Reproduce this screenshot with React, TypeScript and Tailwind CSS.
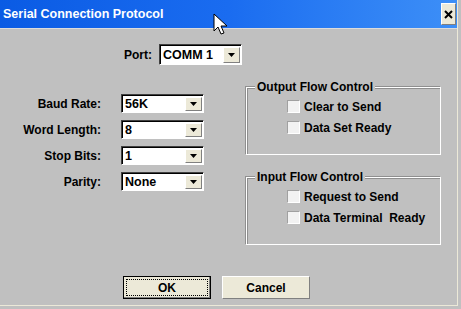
import React from "react";

const font = { fontFamily: '"Liberation Sans", Arial, sans-serif' };

function Combo({ value, width = "w-[83px]", height = "h-[19px]" }: { value: string; width?: string; height?: string }) {
  return (
    <div className={`${width} ${height} flex border border-t-[#404040] border-l-[#404040] border-r-white border-b-white bg-white`}>
      <div className="flex-1 flex border border-black border-r-0 border-b-0 min-w-0">
        <span className="flex-1 pl-[2px] text-[12.5px] font-bold leading-none self-center text-black">{value}</span>
        <div className="w-[17px] flex items-center justify-center bg-[#ece9d8] border-l border-t border-l-white border-t-white border-r border-b border-r-[#808080] border-b-[#808080] my-[1px] mr-[1px]">
          <svg width="7" height="4" viewBox="0 0 7 4"><path d="M0 0h7L3.5 4z" fill="#000" /></svg>
        </div>
      </div>
    </div>
  );
}

function Check({ label }: { label: string }) {
  return (
    <div className="flex items-center gap-[4px] h-[21px]">
      <div className="w-[13px] h-[13px] bg-[#f2f2f2] border border-t-[#a0a0a0] border-l-[#a0a0a0] border-r-white border-b-white" />
      <span className="text-[12px] font-bold text-black leading-none whitespace-pre">{label}</span>
    </div>
  );
}

function Group({ title, items }: { title: string; items: string[] }) {
  return (
    <div className="relative w-[195px] h-[68px] border border-white shadow-[inset_1px_1px_0_#8f8f8f,-1px_-1px_0_#8f8f8f]">
      <span className="absolute -top-[8px] left-[8px] px-[2px] bg-[#c0c0c0] text-[12px] font-bold leading-[14px] text-black">{title}</span>
      <div className="pl-[40px] pt-[8px] flex flex-col">
        {items.map((i) => (
          <Check key={i} label={i} />
        ))}
      </div>
    </div>
  );
}

export default function App() {
  const fields = [
    ["Baud Rate:", "56K"],
    ["Word Length:", "8"],
    ["Stop Bits:", "1"],
    ["Parity:", "None"],
  ];
  return (
    <div style={font} className="relative w-[461px] h-[309px] bg-[#c0c0c0] overflow-hidden select-none">
      <div className="w-[458px] h-[306px] border-r border-b border-[#ece9d8] flex flex-col">
        <div className="h-[29px] flex items-center justify-between pl-[3px] pr-[1px] bg-gradient-to-r from-[#0a5be4] via-[#1a6cf0] to-[#3d8ff7] border-b border-[#dcdcdc]">
          <span className="text-white text-[12.5px] font-bold">Serial Connection Protocol</span>
          <div className="w-[15px] h-[22px] bg-[#ece9d8] flex items-center justify-center border border-white border-r-[#808080] border-b-[#808080]">
            <svg width="9" height="9" viewBox="0 0 9 9"><path d="M1 1l7 7M8 1L1 8" stroke="#000" strokeWidth="2" /></svg>
          </div>
        </div>

        <div className="flex items-center pt-[15px] pl-[112px] gap-[7px]">
          <span className="w-[40px] text-right text-[12px] font-bold">Port:</span>
          <Combo value="COMM 1" height="h-[21px]" />
        </div>

        <div className="flex pt-[22px]">
          <div className="flex flex-col gap-[7px] pt-[7px]">
            {fields.map(([l, v]) => (
              <div key={l} className="flex items-center">
                <span className="w-[101px] text-right text-[12px] font-bold">{l}</span>
                <div className="ml-[20px]">
                  <Combo value={v} />
                </div>
              </div>
            ))}
          </div>
          <div className="ml-[42px] flex flex-col gap-[22px]">
            <Group title="Output Flow Control" items={["Clear to Send", "Data Set Ready"]} />
            <Group title="Input Flow Control" items={["Request to Send", "Data Terminal  Ready"]} />
          </div>
        </div>

        <div className="flex pl-[123px] gap-[11px] pt-[31px]">
          <div className="w-[88px] h-[23px] bg-[#ece9d8] border border-black flex p-[2px] shadow-[inset_-1px_-1px_0_#808080]">
            <div className="flex-1 border border-dotted border-black flex items-center justify-center text-[12px] font-bold">OK</div>
          </div>
          <div className="w-[88px] h-[23px] bg-[#ece9d8] border border-white border-r-[#808080] border-b-[#808080] flex items-center justify-center text-[12px] font-bold">Cancel</div>
        </div>
      </div>

      <svg className="absolute left-[213px] top-[13px]" width="16" height="24" viewBox="0 0 16 24">
        <path d="M1 1v17l4-4 3 7 3-1-3-7h6z" fill="#fff" stroke="#000" strokeWidth="1" strokeLinejoin="round" />
      </svg>
    </div>
  );
}
